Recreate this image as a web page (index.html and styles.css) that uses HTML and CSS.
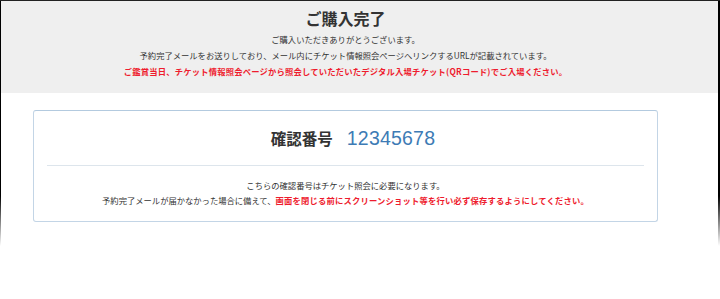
FILE: index.html
```html
<!DOCTYPE html>
<html lang="ja">
<head>
  <meta charset="UTF-8" />
  <meta name="viewport" content="width=device-width, initial-scale=1.0" />
  <title>ご購入完了</title>
  <link rel="stylesheet" href="styles.css">
</head>
<body>

  <div class="frame"></div>

  <header class="complete">
    <div class="inner">
      <h1>ご購入完了</h1>
      <p>ご購入いただきありがとうございます。</p>
      <p>予約完了メールをお送りしており、メール内にチケット情報照会ページへリンクするURLが記載されています。</p>
      <p class="alert">ご鑑賞当日、チケット情報照会ページから照会していただいたデジタル入場チケット(QRコード)でご入場ください。</p>
    </div>
  </header>

  <div class="inner">
    <div class="card">
      <div class="card-head">
        <span class="label">確認番号</span>
        <span class="number">12345678</span>
      </div>
      <div class="card-body">
        <p>こちらの確認番号はチケット照会に必要になります。</p>
        <p>予約完了メールが届かなかった場合に備えて、<b class="alert">画面を閉じる前にスクリーンショット等を行い必ず保存するようにしてください。</b></p>
      </div>
    </div>
  </div>

</body>
</html>
```

FILE: styles.css
```css
body {
  margin: 0;
  font-family: "Noto Sans CJK JP", "Noto Sans", sans-serif;
  color: #333;
  background-color: #fff;
  height: 299px;
  overflow: hidden;
  position: relative;
}

/* window edge that fades out towards the bottom */
.frame {
  position: absolute;
  top: 0;
  left: 0;
  right: 0;
  height: 250px;
  pointer-events: none;
  z-index: 5;
  border-top: 1px solid #222;
}

.frame:before,
.frame:after {
  content: "";
  position: absolute;
  top: 0;
  bottom: 0;
  background: linear-gradient(to bottom, #000 0, #000 195px, rgba(0, 0, 0, 0) 245px);
}

.frame:before {
  left: 0;
  width: 1px;
}

.frame:after {
  right: 0;
  width: 2px;
}

.inner {
  width: 691px;
  text-align: center;
}

.complete {
  background-color: #efefef;
  padding: 6px 0 14px;
}

.complete h1 {
  margin: 0;
  font-size: 16px;
  line-height: 25px;
  font-weight: bold;
  color: #333;
}

.complete p {
  margin: 0;
  font-size: 8.3px;
  line-height: 16px;
}

.alert {
  color: #ee1c2e;
  font-weight: bold;
  letter-spacing: 0.2px;
}

.card {
  margin: 17px 0 0 33px;
  width: 623px;
  border: 1px solid #c3d5e6;
  border-top-color: #b3cadf;
  border-radius: 3px;
}

.card-head {
  display: flex;
  justify-content: center;
  align-items: center;
  gap: 14px;
  height: 28px;
  margin: 13px 13px 0;
  padding: 0 0 13px 15px;
  border-bottom: 1px solid #dde5ec;
}

.card-head .label {
  font-size: 15.5px;
  font-weight: bold;
  color: #333;
}

.card-head .number {
  font-family: "Liberation Sans", Arial, sans-serif;
  font-size: 19.5px;
  color: #3d7bb5;
  letter-spacing: 0.2px;
}

.card-body {
  padding: 12px 0 13px;
}

.card-body p {
  margin: 0;
  font-size: 8.3px;
  line-height: 15px;
}
```
